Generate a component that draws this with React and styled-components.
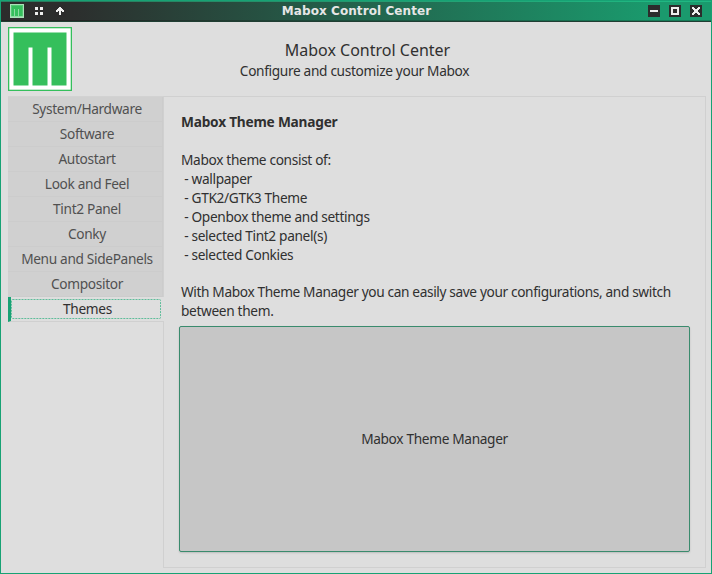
import React from "react";
import styled, { createGlobalStyle } from "styled-components";

const Global = createGlobalStyle`
  * { box-sizing: border-box; }
  body { margin: 0; background: #dedede; }
`;

const Window = styled.div`
  width: 712px;
  height: 574px;
  display: flex;
  flex-direction: column;
  border: 1px solid #17a274;
  border-top: 0;
  background: #dedede;
  color: #303030;
  font: 13.7px/19px "Noto Sans", sans-serif;
  letter-spacing: -0.34px;
  overflow: hidden;
`;

const TitleBar = styled.header`
  height: 22px;
  flex: none;
  display: grid;
  grid-template-columns: 1fr auto 1fr;
  align-items: center;
  padding: 0 9px 0 9px;
  background: linear-gradient(90deg, #2c2c2c 0%, #2c2e2d 10%, #1a9a6d 92%, #1a9a6d 100%);
  border-top: 1px solid #17a274;
  border-bottom: 1px solid #1f3d32;
  box-shadow: inset 0 1px 0 rgba(40, 220, 155, 0.45), inset 0 -1px 0 rgba(0, 0, 0, 0.2);
`;

const Title = styled.div`
  font: bold 12px/18px "DejaVu Sans", sans-serif;
  letter-spacing: 0.08px;
  padding-left: 1px;
  color: #e6e6e6;
  white-space: nowrap;
`;

const ButtonGroup = styled.div`
  display: flex;
  align-items: center;
  gap: 9px;
  justify-content: ${(p) => (p.$end ? "flex-end" : "flex-start")};
  svg { display: block; }
`;

const Header = styled.div`
  height: 74px;
  flex: none;
  display: flex;
  padding: 5px 7px 0;
`;

const Headings = styled.div`
  flex: 1;
  display: flex;
  flex-direction: column;
  align-items: center;
  padding: 12px 75px 0 0;
  margin-left: 8px;
`;

const Heading = styled.div`
  padding-left: 26px;
  font-size: 16px;
  line-height: 22px;
  letter-spacing: 0;
  white-space: nowrap;
`;

const SubHeading = styled.div`
  line-height: 20px;
  white-space: nowrap;
`;

const Notebook = styled.div`
  flex: 1;
  display: flex;
  margin: 0 5px 5px 7px;
`;

const Tabs = styled.nav`
  flex: none;
  width: 155px;
  display: flex;
  flex-direction: column;
  border-top: 1px solid #d2d2d2;
`;

const Tab = styled.div`
  height: 25px;
  display: flex;
  align-items: center;
  justify-content: center;
  padding: 0 0 1px 4px;
  white-space: nowrap;
  color: #505050;
  background: #d0d0d0;
  border-bottom: 1px solid #cccccc;
  border-right: 1px solid #cccccc;
`;

const ActiveTab = styled(Tab)`
  position: relative;
  z-index: 1;
  justify-content: flex-start;
  margin-right: -1px;
  padding: 2px 0 2px 0;
  border: 0;
  border-left: 3px solid #17a274;
  border-bottom: 1px solid #d0d0d0;
  background: #dedede;
  color: #303030;
`;

const FocusRing = styled.svg`
  display: block;
  position: absolute;
  inset: 0;
`;

const FocusLabel = styled.div`
  position: relative;
  width: 150px;
  height: 20px;
  line-height: 19px;
  padding-left: 3px;
  text-align: center;
`;

const Panel = styled.main`
  flex: 1;
  min-width: 0;
  display: flex;
  flex-direction: column;
  border: 1px solid #d0d0d0;
  padding: 15px 15px 15px;
`;

const Copy = styled.div`
  padding: 0.45px 0 0 2px;
  height: 214px;
  flex: none;
`;

const Line = styled.div`
  height: 18.9px;
  line-height: 19px;
  white-space: pre;
  letter-spacing: ${(p) => p.$spacing || "inherit"};
  font-weight: ${(p) => (p.$bold ? 700 : 400)};
`;

const LaunchButton = styled.button`
  flex: 1;
  border: 1px solid #3a8b6d;
  border-radius: 2px;
  background: #c6c6c6;
  color: #303030;
  font: inherit;
  letter-spacing: inherit;
  box-shadow: 0 1px 2px rgba(0, 0, 0, 0.15);
  padding: 0 0 1px;
`;

const Logo = () => (
  <svg width="64" height="64" viewBox="0 0 64 64">
    <rect width="64" height="64" fill="#35bf5c" />
    <rect x="1.3" y="1.3" width="61.4" height="61.4" fill="#fff" />
    <path d="M5.5 5.5H58.5V58.5H43.5V20.5H39.5V58.5H24.5V20.5H20.5V58.5H5.5Z" fill="#35bf5c" />
  </svg>
);

const SmallLogo = () => (
  <svg width="14" height="14" viewBox="0 0 14 14">
    <rect width="14" height="14" fill="#a8e3b8" />
    <rect x="1" y="1" width="12" height="12" fill="#52c873" />
    <path d="M2 2H12V12H2Z" fill="#35bf5c" />
    <path d="M4.5 5V13M8.5 5V13" stroke="#8edba3" />
    <path d="M1 12.5H13" stroke="#8edba3" />
  </svg>
);

const Glyph = ({ children }) => (
  <svg width="12" height="12" viewBox="0 0 12 12" shapeRendering="crispEdges">
    <rect width="12" height="12" fill="#2c2c2c" />
    {children}
  </svg>
);

const tabs = [
  "System/Hardware",
  "Software",
  "Autostart",
  "Look and Feel",
  "Tint2 Panel",
  "Conky",
  "Menu and SidePanels",
  "Compositor",
];

const lines = [
  "",
  "Mabox theme consist of:",
  " - wallpaper",
  " - GTK2/GTK3 Theme",
  " - Openbox theme and settings",
  " - selected Tint2 panel(s)",
  " - selected Conkies",
  "",
  "With Mabox Theme Manager you can easily save your configurations, and switch",
  "between them.",
];

export default function App() {
  return (
    <Window>
      <Global />
      <TitleBar>
        <ButtonGroup>
          <SmallLogo />
          <Glyph>
            <path d="M2 2h3v3H2zM7 2h3v3H7zM2 7h3v3H2zM7 7h3v3H7z" fill="#eee" />
          </Glyph>
          <Glyph>
            <path d="M5 2h2v1h1v1h1v1h1v2H8V6H7v4H5V6H4v1H2V5h1V4h1V3h1z" fill="#eee" />
          </Glyph>
        </ButtonGroup>
        <Title>Mabox Control Center</Title>
        <ButtonGroup $end>
          <Glyph>
            <path d="M2 5h8v2H2z" fill="#eee" />
          </Glyph>
          <Glyph>
            <path d="M2 2h8v8H2zM4 4v4h4V4z" fillRule="evenodd" fill="#eee" />
          </Glyph>
          <Glyph>
            <path
              d="M2 2h2v1h1v1h2V3h1V2h2v2H9v1H8v2h1v1h1v2H8V9H7V8H5v1H4v1H2V8h1V7h1V5H3V4H2z"
              fill="#eee"
            />
          </Glyph>
        </ButtonGroup>
      </TitleBar>
      <Header>
        <Logo />
        <Headings>
          <Heading>Mabox Control Center</Heading>
          <SubHeading>Configure and customize your Mabox</SubHeading>
        </Headings>
      </Header>
      <Notebook>
        <Tabs>
          {tabs.map((t) => (
            <Tab key={t}>{t}</Tab>
          ))}
          <ActiveTab>
            <FocusLabel>
              <FocusRing width="150" height="20">
                <rect x="0.5" y="0.5" width="149" height="19" rx="1" fill="none" stroke="#5fbd9a" strokeDasharray="2 1" />
              </FocusRing>
              Themes
            </FocusLabel>
          </ActiveTab>
        </Tabs>
        <Panel>
          <Copy>
            <Line $bold $spacing="-0.22px">Mabox Theme Manager</Line>
            {lines.map((l, i) => (
              <Line key={i} $spacing={l.length > 60 ? "-0.37px" : undefined}>{l}</Line>
            ))}
          </Copy>
          <LaunchButton>Mabox Theme Manager</LaunchButton>
        </Panel>
      </Notebook>
    </Window>
  );
}
